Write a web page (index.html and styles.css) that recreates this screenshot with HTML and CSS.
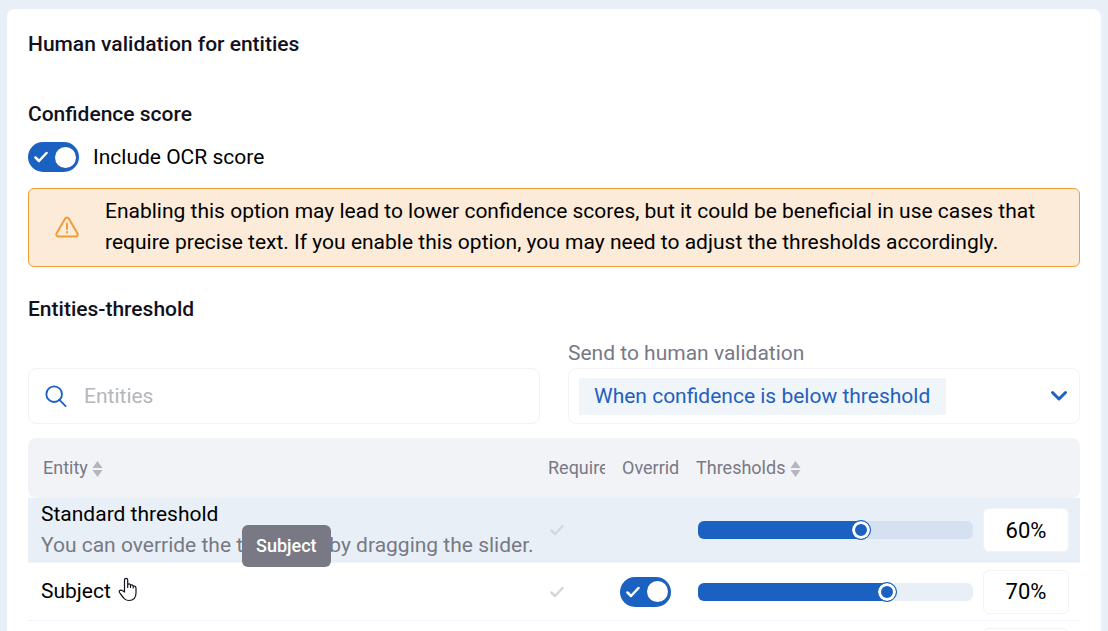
FILE: index.html
```html
<!DOCTYPE html>
<html lang="en">
<head>
    <meta charset="UTF-8">
    <meta name="viewport" content="width=device-width, initial-scale=1.0">
    <title>Human validation for entities</title>
    <link rel="stylesheet" href="styles.css">
</head>
<body>
    <main class="card">
        <h1>Human validation for entities</h1>

        <!-- Confidence score -->
        <h2>Confidence score</h2>
        <div class="option">
            <span class="toggle">
                <input type="checkbox" id="ocrScore" checked>
                <svg class="toggle-check" viewBox="0 0 14 12"><path d="M1.5 6.5 5 10 12.5 2"/></svg>
            </span>
            <label for="ocrScore">Include OCR score</label>
        </div>

        <div class="alert">
            <svg class="alert-icon" viewBox="0 0 24 22">
                <path d="M10.2 2.4 1.5 17.6A2 2 0 0 0 3.2 20.5H20.8A2 2 0 0 0 22.5 17.6L13.8 2.4A2.1 2.1 0 0 0 10.2 2.4Z"/>
                <path d="M12 7.5V13"/>
                <path d="M12 16V16.500"/>
            </svg>
            <p>Enabling this option may lead to lower confidence scores, but it could be beneficial in use cases that require precise text. If you enable this option, you may need to adjust the thresholds accordingly.</p>
        </div>

        <!-- Thresholds -->
        <h2 class="threshold-title">Entities-threshold</h2>
        <div class="filters">
            <div class="box search">
                <svg class="search-icon" viewBox="0 0 24 24"><circle cx="10" cy="10" r="8.5"/><path d="M15.5 16 22.5 23"/></svg>
                <input type="search" placeholder="Entities" aria-label="Entities">
            </div>
            <div class="field">
                <label for="sendTo">Send to human validation</label>
                <div class="box select-box">
                    <select id="sendTo">
                        <option>When confidence is below threshold</option>
                    </select>
                    <svg class="chevron" viewBox="0 0 18 12"><path d="M2.5 2.5 9 9 15.5 2.5"/></svg>
                </div>
            </div>
        </div>

        <table>
            <thead>
                <tr>
                    <th class="col-entity">Entity <svg class="sort" viewBox="0 0 10 16"><path d="M0 7 5 0 10 7ZM0 9H10L5 16Z"/></svg></th>
                    <th class="col-flag"><div class="clip">Required</div></th>
                    <th class="col-flag"><div class="clip">Override</div></th>
                    <th class="col-threshold">Thresholds <svg class="sort" viewBox="0 0 10 16"><path d="M0 7 5 0 10 7ZM0 9H10L5 16Z"/></svg></th>
                </tr>
            </thead>
            <tbody>
                <tr class="standard">
                    <td class="entity">
                        Standard threshold
                        <div class="hint">You can override the threshold by dragging the slider.</div>
                    </td>
                    <td><svg class="required" viewBox="0 0 14 12"><path d="M1.5 6.5 5 10 12.5 2"/></svg></td>
                    <td></td>
                    <td>
                        <div class="threshold">
                            <input type="range" min="0" max="100" value="60" style="--value: 60%" aria-label="Standard threshold">
                            <input type="text" class="percent" value="60%" aria-label="Standard threshold percent">
                        </div>
                    </td>
                </tr>
                <tr>
                    <td class="entity">
                        Subject
                        <div class="tooltip">Subject</div>
                        <svg class="pointer" viewBox="0 0 20 25">
                            <path d="M6.5 15V3A1.6 1.6 0 0 1 9.7 3V10.5 7.5Q11.2 6 12.5 8V10.5 8.3Q14.2 7 15.2 9V11 9.3Q17.4 8.3 18 11V16C18 21 15.5 23.5 11 23.5C7 23.5 5.5 21 1.5 15.5C.5 13.5 3 12.5 4.3 13.5Z"/>
                        </svg>
                    </td>
                    <td><svg class="required" viewBox="0 0 14 12"><path d="M1.5 6.5 5 10 12.5 2"/></svg></td>
                    <td>
                        <span class="toggle">
                            <input type="checkbox" checked aria-label="Override Subject">
                            <svg class="toggle-check" viewBox="0 0 14 12"><path d="M1.5 6.5 5 10 12.5 2"/></svg>
                        </span>
                    </td>
                    <td>
                        <div class="threshold">
                            <input type="range" min="0" max="100" value="70" style="--value: 70%" aria-label="Subject threshold">
                            <input type="text" class="percent" value="70%" aria-label="Subject threshold percent">
                        </div>
                    </td>
                </tr>
                <tr>
                    <td class="entity"></td>
                    <td></td>
                    <td></td>
                    <td>
                        <div class="threshold">
                            <input type="range" min="0" max="100" value="60" style="--value: 60%" aria-label="Threshold">
                            <input type="text" class="percent" value="60%" aria-label="Threshold percent">
                        </div>
                    </td>
                </tr>
            </tbody>
        </table>
    </main>

    <script>
        // keep the filled part and the percent box in step with the slider
        document.querySelectorAll('.threshold').forEach(function (row) {
            const slider = row.querySelector('input[type="range"]');
            const percent = row.querySelector('.percent');

            slider.addEventListener('input', function () {
                slider.style.setProperty('--value', slider.value + '%');
                percent.value = slider.value + '%';
            });
        });
    </script>
</body>
</html>
```
FILE: styles.css
```css
* {
    box-sizing: border-box;
}

body {
    margin: 0;
    padding: 9px 7px 0;
    height: 100vh;
    overflow: hidden;
    background-color: #e8eff7;
    color: #000;
    font-family: Roboto, sans-serif;
    font-size: 21px;
    line-height: 30px;
}

.card {
    background-color: white;
    padding: 20px 21px;
    border-radius: 8px;
}

h1,
h2 {
    margin: 0;
    color: #11111d;
    font-size: 21px;
    font-weight: 500;
}

h2 {
    margin-top: 40px;
}

.threshold-title {
    margin-top: 27px;
}

svg {
    fill: none;
    stroke-linecap: round;
    stroke-linejoin: round;
}

input,
select {
    margin: 0;
    font-family: inherit;
    font-size: inherit;
}

/* Toggle */
.option {
    display: flex;
    align-items: center;
    gap: 14px;
    margin-top: 13px;
}

.toggle {
    display: block;
    position: relative;
    width: 51px;
    height: 30px;
}

.toggle input {
    appearance: none;
    display: flex;
    align-items: center;
    width: 100%;
    height: 100%;
    padding: 0 3px;
    border-radius: 15px;
    background-color: #b5b6bd;
    cursor: pointer;
}

.toggle input::before {
    content: "";
    width: 21px;
    height: 21px;
    border-radius: 50%;
    background-color: white;
}

.toggle input:checked {
    justify-content: flex-end;
    background-color: #1b61c1;
}

.toggle-check {
    position: absolute;
    left: 6px;
    top: 9px;
    width: 14px;
    height: 12px;
    stroke: white;
    stroke-width: 2.5;
    pointer-events: none;
}

/* Warning */
.alert {
    display: flex;
    align-items: center;
    gap: 26px;
    margin-top: 16px;
    padding: 7px 26px 8px;
    border: 1px solid #f09c38;
    border-radius: 6px;
    background-color: #fcebd8;
    line-height: 31px;
}

.alert p {
    margin: 0;
}

.alert-icon {
    flex: none;
    width: 24px;
    height: 22px;
    stroke: #f09c38;
    stroke-width: 2;
}

/* Filters */
.filters {
    display: grid;
    grid-template-columns: 1fr 1fr;
    gap: 28px;
    align-items: end;
    margin-top: 14px;
}

.field label {
    display: block;
    color: #787985;
}

.box {
    display: flex;
    align-items: center;
    height: 56px;
    border: 1px solid #f2f3f7;
    border-radius: 8px;
}

.search {
    gap: 17px;
    padding: 0 16px;
}

.search input {
    flex: 1;
    padding: 0;
    border: none;
    outline: none;
    background: none;
}

.search input::placeholder {
    color: #b5b6bd;
}

.search-icon {
    width: 22px;
    height: 22px;
    stroke: #1b61c1;
    stroke-width: 2;
}

.select-box {
    justify-content: space-between;
    padding: 0 11px 0 10px;
}

select {
    appearance: none;
    height: 37px;
    padding: 0 15px;
    border: none;
    border-radius: 0;
    background-color: #f0f5fa;
    color: #1f5fc0;
}

.chevron {
    width: 18px;
    height: 12px;
    stroke: #1b61c1;
    stroke-width: 3;
}

/* Table */
table {
    width: 100%;
    margin-top: 14px;
    border-collapse: separate;
    border-spacing: 0;
    table-layout: fixed;
}

th {
    height: 60px;
    padding: 0 8px;
    background-color: #f2f3f7;
    color: #787985;
    font-size: 18px;
    font-weight: 400;
    text-align: left;
}

th:first-child {
    padding-left: 15px;
    border-radius: 8px 0 0 8px;
}

th:last-child {
    border-radius: 0 8px 8px 0;
}

.col-flag {
    width: 74px;
}

.col-threshold {
    width: 392px;
}

.clip {
    width: 57px;
    overflow: hidden;
}

.sort {
    width: 11px;
    height: 16px;
    vertical-align: -3px;
    fill: #b5b6bd;
}

td {
    height: 58px;
    padding: 0 6px;
    border-bottom: 1px solid #eff4fa;
    line-height: 31px;
}

.standard td {
    height: 65px;
    background-color: #e8eff7;
}

.entity {
    position: relative;
    padding: 0 0 0 13px;
    white-space: nowrap;
}

.hint {
    color: #787985;
}

.required {
    display: block;
    width: 14px;
    height: 12px;
    margin-left: 4px;
    stroke: #d5d7de;
    stroke-width: 2.5;
}

.threshold {
    display: flex;
    align-items: center;
    gap: 10px;
    padding: 0 5px 0 4px;
}

input[type="range"] {
    appearance: none;
    flex: 1;
    min-width: 0;
    height: 18px;
    border-radius: 6px;
    background: linear-gradient(#1b61c1, #1b61c1) 0 0 / var(--value) 100% no-repeat #e8eff7;
    cursor: pointer;
}

.standard input[type="range"] {
    background-color: #d5e0f1;
}

input[type="range"]::-webkit-slider-thumb {
    appearance: none;
    width: 20px;
    height: 20px;
    border: 1px solid #1b61c1;
    border-radius: 50%;
    background-color: #1b61c1;
    box-shadow: inset 0 0 0 3px white;
}

.percent {
    width: 86px;
    height: 44px;
    border: 1px solid #f2f3f7;
    border-radius: 6px;
    background-color: white;
    font-size: 22px;
    text-align: center;
}

.tooltip {
    position: absolute;
    left: 214px;
    bottom: 53px;
    padding: 6px 14px;
    border-radius: 6px;
    background-color: #787985;
    color: white;
    font-size: 18px;
    font-weight: 500;
    line-height: 30px;
}

.pointer {
    position: absolute;
    left: 90px;
    top: 14px;
    width: 20px;
    height: 25px;
    fill: white;
    stroke: #11111d;
    stroke-width: 1.2;
}
```
